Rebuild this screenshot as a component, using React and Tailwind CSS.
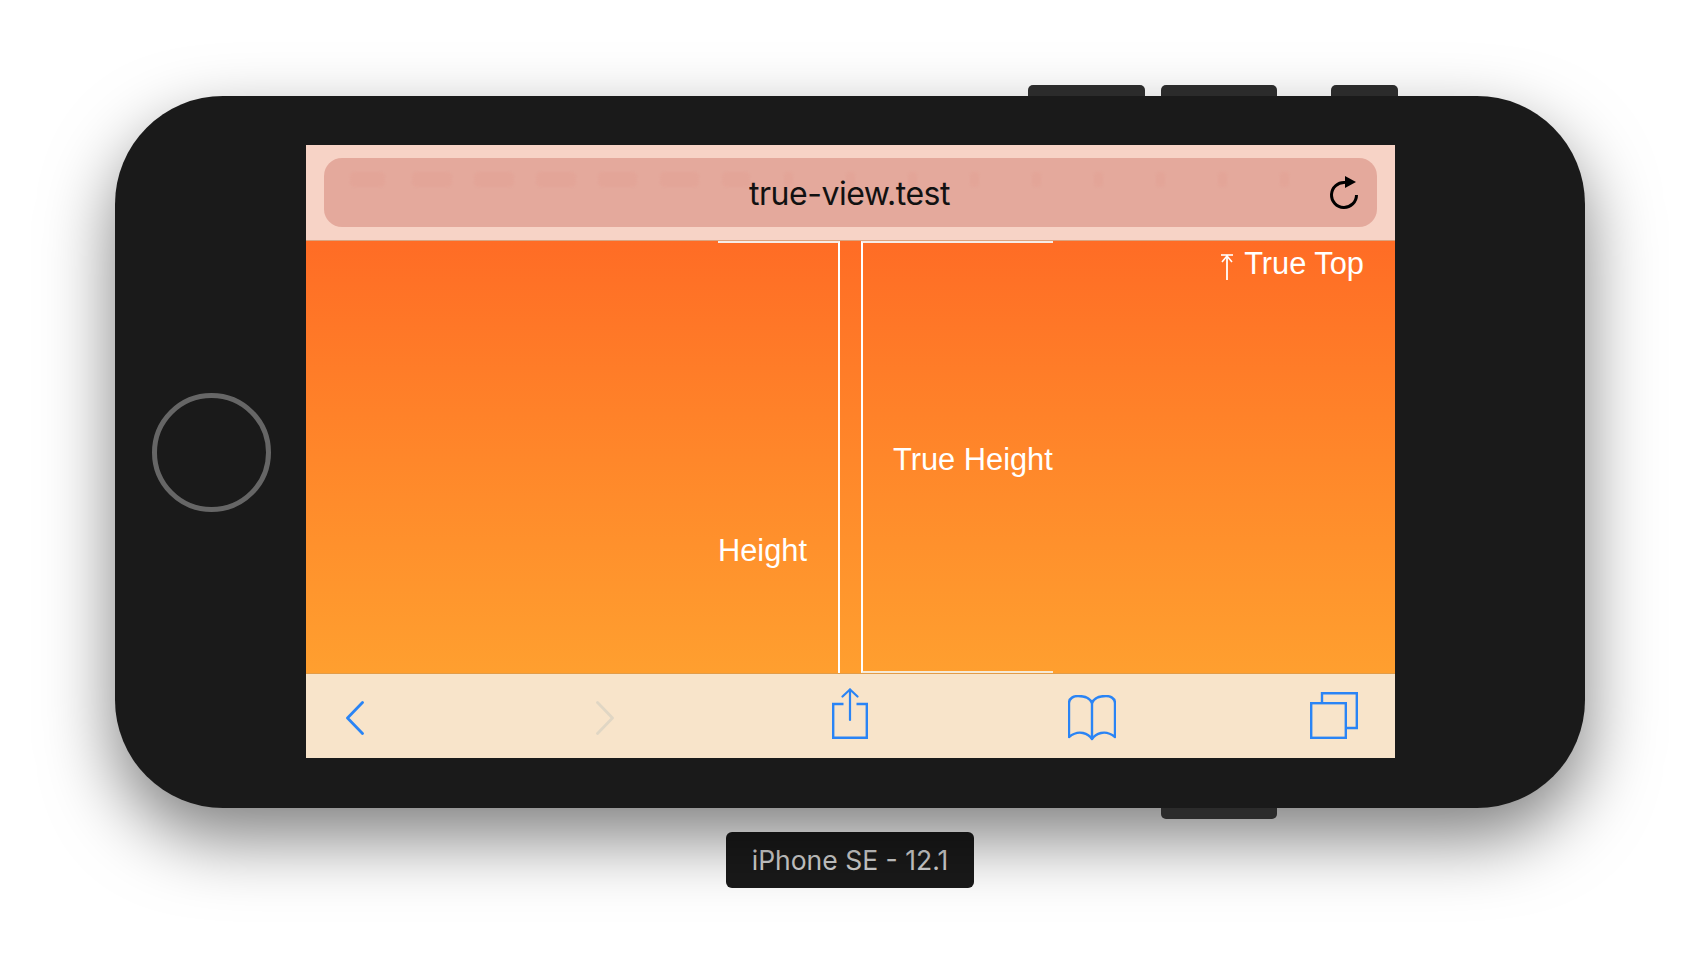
import React from 'react'

const blue = '#2a84f5'

// faint smudges that show through the blurred address bar
const smudges = [35, 40, 40, 40, 39, 39, 28, 9, 9, 9, 9, 9, 9, 9, 9, 9]

const BackIcon = ({ color, flip, className }) => (
  <svg className={className} width="18" height="34" viewBox="0 0 18 34" fill="none">
    <path
      d={flip ? 'M1.5 1.5 L16.5 17 L1.5 32.5' : 'M16.5 1.5 L1.5 17 L16.5 32.5'}
      stroke={color}
      strokeWidth="2.8"
      strokeLinecap="round"
      strokeLinejoin="round"
    />
  </svg>
)

const ShareIcon = ({ className }) => (
  <svg className={className} width="36" height="51" viewBox="0 0 36 51" fill="none">
    <path d="M11.5 16 H1.2 V49.8 H34.8 V16 H24.5" stroke={blue} strokeWidth="2.4" />
    <path d="M18 1.5 V32" stroke={blue} strokeWidth="2.2" strokeLinecap="round" />
    <path d="M10.5 8.5 L18 1.5 L25.5 8.5" stroke={blue} strokeWidth="2.2" strokeLinecap="round" strokeLinejoin="round" />
  </svg>
)

const BookIcon = ({ className }) => (
  <svg className={className} width="48" height="46" viewBox="0 0 48 46" fill="none">
    <path
      d="M24 8 C22 3 16 1 10 1 C6 1 1 3 1 8 V42 C6 38 11 37 15 38 C19 39 22 41 24 44 C26 41 29 39 33 38 C37 37 42 38 47 42 V8 C47 3 42 1 38 1 C32 1 26 3 24 8 Z"
      stroke={blue}
      strokeWidth="2.4"
      strokeLinejoin="round"
    />
    <path d="M24 8 V44" stroke={blue} strokeWidth="2.4" />
  </svg>
)

const TabsIcon = ({ className }) => (
  <svg className={className} width="48" height="47" viewBox="0 0 48 47" fill="none">
    <path d="M12 11 V1.2 H46.8 V36 H37" stroke={blue} strokeWidth="2.4" />
    <rect x="1.2" y="11.2" width="34.6" height="34.6" stroke={blue} strokeWidth="2.4" />
  </svg>
)

const ReloadIcon = () => (
  <svg width="30" height="36" viewBox="0 0 30 36" fill="none">
    <path d="M16 7.5 A12.5 12.5 0 1 0 27.5 20" stroke="#000" strokeWidth="3" />
    <path d="M16 1 L27 7 L16 13 Z" fill="#000" />
  </svg>
)

const TrueTopArrow = () => (
  <svg width="12" height="26" viewBox="0 0 12 26" fill="none">
    <path d="M0 1 H12" stroke="#fff" strokeWidth="1.6" />
    <path d="M6 1 V26" stroke="#fff" strokeWidth="1.8" />
    <path d="M1 8 L6 2 L11 8" stroke="#fff" strokeWidth="1.6" />
  </svg>
)

export default function App() {
  return (
    <div className="h-[976px] w-[1700px] overflow-hidden bg-white pl-[115px] pt-[96px] font-['Liberation_Sans',sans-serif]">
      <div className="w-[1470px]">
        {/* Device */}
        <div className="relative flex h-[712px] items-center rounded-[108px] bg-[#1a1a1a] shadow-[0_30px_70px_rgba(0,0,0,0.5)]">
          {/* Hardware buttons */}
          <div className="absolute left-[913px] top-[-11px] h-[11px] w-[117px] rounded-t-[5px] bg-[#2b2b2b]" />
          <div className="absolute left-[1046px] top-[-11px] h-[11px] w-[116px] rounded-t-[5px] bg-[#2b2b2b]" />
          <div className="absolute left-[1216px] top-[-11px] h-[11px] w-[67px] rounded-t-[5px] bg-[#2b2b2b]" />
          <div className="absolute bottom-[-11px] left-[1046px] h-[11px] w-[116px] rounded-b-[5px] bg-[#2b2b2b]" />

          {/* Home button */}
          <div className="flex w-[191px] justify-center pl-[2px]">
            <div className="h-[119px] w-[119px] rounded-full border-[5px] border-[#666666]" />
          </div>

          {/* Screen */}
          <div className="mb-[1px] flex h-[613px] w-[1089px] flex-col">
            {/* Address bar */}
            <div className="h-[96px] shrink-0 border-b border-[#dba37f] bg-[#f7d3c6] px-[18px] pt-[13px]">
              <div className="relative flex h-[69px] items-center justify-center rounded-[18px] bg-[#e4a99c]">
                <div className="absolute left-[26px] top-[14px] flex">
                  {smudges.map((width, i) => (
                    <div key={i} className="w-[62px]">
                      <div className="h-[15px] rounded-[5px] bg-[#e3a598] blur-[1px]" style={{ width }} />
                    </div>
                  ))}
                </div>
                <span className="relative right-[1px] top-[1px] font-['Inter',sans-serif] text-[32px] tracking-[-0.5px] text-[#111111]">true-view.test</span>
                <div className="absolute right-[18px] top-[17px]">
                  <ReloadIcon />
                </div>
              </div>
            </div>

            {/* Page content */}
            <div className="flex h-[432px] shrink-0 bg-gradient-to-b from-[#ff6c25] to-[#ff9f2f] pl-[412px] text-[30.8px] leading-none text-white">
              <div className="flex items-end border-r-2 border-t-2 border-r-white border-t-[#f6ece6] pb-[106px] pr-[31px]">
                <span>Height</span>
              </div>
              <div className="ml-[21px] flex items-center border-b-2 border-l-2 border-t-2 border-b-[#f5ead8] border-l-white border-t-[#f6ece6] pl-[30px] pt-[6px]">
                <span>True Height</span>
              </div>
              <div className="ml-auto flex items-start gap-[11px] pr-[31px] pt-[8px]">
                <div className="pt-[5px]">
                  <TrueTopArrow />
                </div>
                <span>True Top</span>
              </div>
            </div>

            {/* Toolbar */}
            <div className="flex h-[85px] shrink-0 items-center border-t border-[#e29c48] bg-[#f8e4ca] pl-[40px]">
              <BackIcon color={blue} className="mt-[3px]" />
              <BackIcon color="#e0d6c4" flip className="ml-[232px] mt-[3px]" />
              <ShareIcon className="mb-[6px] ml-[218px]" />
              <BookIcon className="ml-[200px] mt-[3px]" />
              <TabsIcon className="mb-[2px] ml-[194px]" />
            </div>
          </div>
        </div>

        {/* Device label */}
        <div className="mx-auto mt-[24px] flex h-[56px] w-[248px] items-center justify-center rounded-[6px] bg-[#1a1a1a] pt-[2px] font-['Inter',sans-serif] text-[26.5px] text-[#d4d4d4] shadow-[0_0_0_1px_rgba(255,255,255,0.15)]">
          iPhone SE - 12.1
        </div>
      </div>
    </div>
  )
}
